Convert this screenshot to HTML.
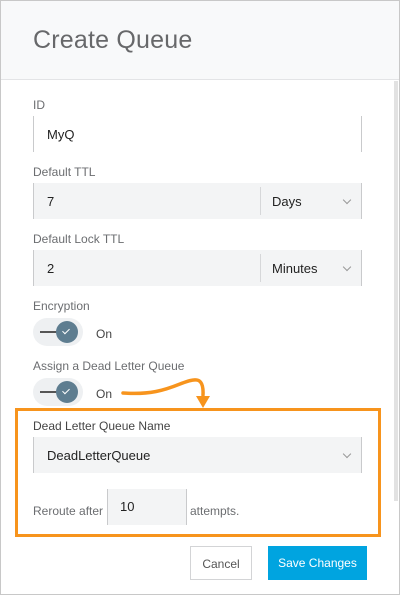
<!DOCTYPE html>
<html><head><style>
*{box-sizing:border-box;margin:0;padding:0}
body{width:400px;height:595px;overflow:hidden;background:#fff;font-family:"Liberation Sans",sans-serif;position:relative}
.frame{position:absolute;left:0;top:0;width:400px;height:595px;border:1px solid #c8c8c8}
.hdr{position:absolute;left:1px;top:1px;width:398px;height:79px;background:#f8f9fa;border-bottom:1px solid #e3e4e6}
.hdr h1{position:absolute;left:32px;top:25px;font-weight:normal;font-size:25px;color:#67686a;letter-spacing:0.2px}
.lbl{position:absolute;left:33px;font-size:12px;color:#6b6d70}
.in{position:absolute;left:33px;width:329px;height:36px;border-left:1px solid #c9cacc;border-right:1px solid #c9cacc;font-size:13px;color:#222;padding:11px 0 0 13px}
.grey{background:#f3f4f5}
.div{position:absolute;left:226px;top:4px;bottom:4px;border-left:1px solid #d6d7d9}
.sel{position:absolute;left:238px;top:11px}
.chev{position:absolute;right:11px;top:14px;width:6px;height:6px;border-right:1px solid #999;border-bottom:1px solid #999;transform:rotate(45deg)}
.tog{position:absolute;left:33px;width:50px;height:28px;border-radius:14px;background:#eef0f2}
.tog .ln{position:absolute;left:7px;top:13px;width:18px;height:1.5px;background:#555}
.tog .kn{position:absolute;left:23px;top:3px;width:22px;height:22px;border-radius:50%;background:#5e7d90}
.tog .kn:after{content:"";position:absolute;left:8px;top:6px;width:3px;height:6px;border-right:1px solid #fff;border-bottom:1px solid #fff;transform:rotate(45deg)}
.on{position:absolute;left:96px;font-size:12px;color:#444}
.box{position:absolute;left:15px;top:408px;width:366px;height:129px;border:3px solid #f7941d}
.btn{position:absolute;top:546px;height:34px;font-size:12px;text-align:center;line-height:34px}
.scroll{position:absolute;left:394px;top:81px;width:4px;height:420px;background:#e2e2e2}
</style></head><body>
<div class="frame"></div>
<div class="hdr"><h1>Create Queue</h1></div>
<div class="scroll"></div>

<div class="lbl" style="top:98px">ID</div>
<div class="in" style="top:116px">MyQ</div>

<div class="lbl" style="top:165px">Default TTL</div>
<div class="in grey" style="top:183px">7<div class="div"></div><span class="sel">Days</span><div class="chev"></div></div>

<div class="lbl" style="top:232px">Default Lock TTL</div>
<div class="in grey" style="top:250px">2<div class="div"></div><span class="sel">Minutes</span><div class="chev"></div></div>

<div class="lbl" style="top:299px">Encryption</div>
<div class="tog" style="top:318px"><div class="ln"></div><div class="kn"></div></div>
<div class="on" style="top:327px">On</div>

<div class="lbl" style="top:359px">Assign a Dead Letter Queue</div>
<div class="tog" style="top:378px"><div class="ln"></div><div class="kn"></div></div>
<div class="on" style="top:387px">On</div>

<svg style="position:absolute;left:0;top:0" width="400" height="595">
<path d="M123 393 C150 395 165 390 180 384 C195 378 204 376 203 395" fill="none" stroke="#f7941d" stroke-width="3.5" stroke-linecap="round"/>
<path d="M196 396 L210 396 L203 408 Z" fill="#f7941d"/>
</svg>

<div class="box"></div>
<div class="lbl" style="top:419px;color:#444">Dead Letter Queue Name</div>
<div class="in grey" style="top:437px">DeadLetterQueue<div class="chev"></div></div>

<div class="lbl" style="top:504px">Reroute after</div>
<div class="in grey" style="top:489px;left:107px;width:80px;padding-left:12px;padding-top:10px">10</div>
<div class="lbl" style="top:504px;left:190px">attempts.</div>

<div class="btn" style="left:190px;width:62px;border:1px solid #d3d4d6;color:#555">Cancel</div>
<div class="btn" style="left:268px;width:99px;background:#00a4e0;color:#fff">Save Changes</div>
</body></html>
